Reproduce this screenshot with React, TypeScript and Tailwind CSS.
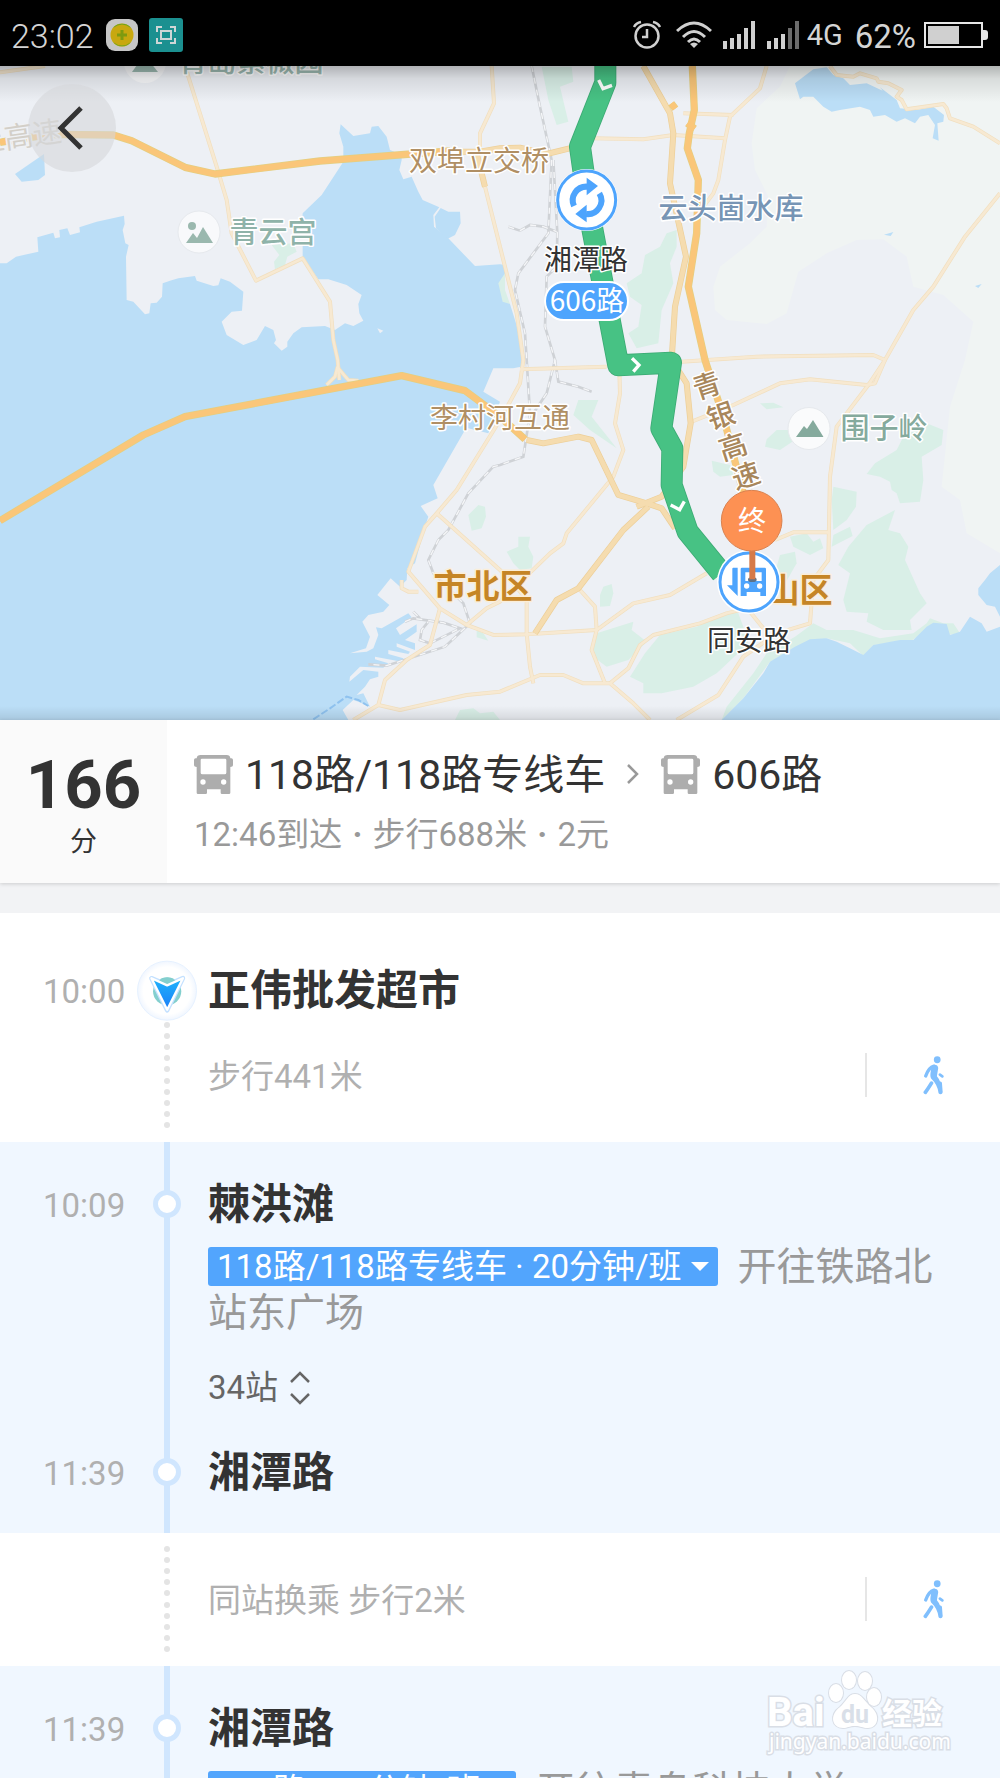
import React, { useState } from 'react';

const MAP_FONT = "font-['Noto_Sans_CJK_SC',sans-serif]";

const LAND_TINTS = [
    'M2370 198 L2340 260 2270 325 2255 430 2265 510 2305 590 2300 680 2250 730 2160 800 2140 860 2145 930 2180 960 2300 972 2360 940 2395 815 2480 760 2570 720 2650 718 2720 770 2740 860 2830 885 2920 965 2895 1080 2850 1220 2825 1460 2880 1500 2900 1600 3000 1660 3000 198 Z',
];

const PARKS = [
    'M1625 200 L1715 200 1720 245 1680 260 1705 365 1670 375 1645 300 Z',
    'M2030 690 L2000 700 1980 740 1935 765 1925 820 1880 850 1890 890 1925 915 1915 980 1885 1000 1910 1045 1975 1030 1985 930 2020 850 2010 790 2030 740 Z',
    'M815 735 L880 730 890 755 862 770 855 795 825 808 822 785 838 765 Z',
    'M1500 815 L1485 830 1500 880 1508 910 1530 912 1515 870 1515 820 Z',
    'M1735 1200 L1795 1200 1775 1250 1850 1345 1770 1290 1720 1245 Z',
    'M1435 1515 L1455 1520 1458 1550 1445 1585 1415 1592 1405 1545 Z',
    'M1430 1890 L1450 1900 1465 1922 1430 1912 Z',
    'M1380 2130 L1420 2125 1440 2140 1480 2135 1500 2160 1365 2160 Z',
    'M1555 1610 L1590 1610 1585 1640 1600 1670 1595 1705 1560 1710 1540 1690 1520 1655 1555 1640 Z',
    'M1810 1760 L1835 1752 1840 1780 1830 1818 1800 1820 1800 1785 Z',
    'M2280 1210 L2320 1208 2350 1222 2300 1228 Z',
    'M2330 1290 L2365 1290 2385 1320 2340 1350 2295 1340 2300 1318 Z',
    'M2135 1382 L2190 1395 2200 1425 2160 1430 2140 1415 Z',
    'M2780 1270 L2830 1290 2825 1335 2765 1370 2770 1440 2760 1505 2700 1510 2690 1480 2675 1470 2670 1445 2640 1430 2600 1422 2625 1390 2690 1350 2710 1310 Z',
    'M2500 1460 L2570 1475 2568 1520 2540 1560 2500 1590 2495 1500 Z',
    'M2685 1530 L2665 1590 2700 1600 2725 1640 2715 1680 2760 1780 2780 1810 2730 1860 2735 1890 2650 1890 2600 1865 2605 1840 2540 1835 2530 1800 2550 1720 2515 1695 2545 1640 2600 1575 Z',
    'M2370 1610 L2420 1600 2440 1625 2460 1615 2470 1645 2430 1665 2380 1640 Z',
    'M2500 1605 L2550 1580 2558 1608 2495 1640 Z',
    'M2340 1665 L2385 1655 2390 1690 2350 1760 2330 1700 Z',
    'M1790 1900 L1900 1865 1895 1890 1940 1925 1885 1980 1820 2000 1780 1970 1775 1935 Z',
    'M2215 1840 L2190 1835 2090 1880 1980 1905 1935 1960 1890 2030 1930 2050 1930 2080 1985 2080 2080 2060 2150 2020 2230 1945 2245 1925 2230 1880 Z',
    'M2165 2160 L2180 2120 2260 2020 2300 1960 2385 1910 2440 1870 2480 1890 2560 1890 2640 1915 2740 1900 2780 1870 2790 1855 2830 1870 2860 1870 2880 1900 2840 1905 2780 1890 2730 1925 2620 1935 2590 1968 2550 1930 2480 1915 2310 1985 2230 2095 Z',
];

const WATERS = [
    'M0 790 L20 790 48 770 115 755 112 712 160 698 165 715 180 712 178 690 202 685 210 705 240 697 238 682 290 665 372 647 374 672 368 690 376 730 386 735 378 770 380 900 400 905 435 943 448 940 452 910 470 908 486 890 488 850 510 842 535 835 585 828 590 842 640 858 655 856 662 835 690 845 730 875 726 932 695 935 665 965 680 1005 730 1035 770 1020 795 978 820 990 828 1020 822 1030 845 1052 862 1040 862 1025 880 1000 905 982 975 978 1005 990 1035 970 1060 978 1090 962 1078 940 1075 912 1085 885 1040 855 985 838 955 838 908 770 908 735 925 720 905 680 908 640 965 585 1030 485 1030 440 1018 400 1022 373 1060 408 1110 400 1115 380 1135 378 1160 410 1170 450 1205 465 1205 480 1198 510 1210 538 1235 530 1255 575 1268 600 1318 622 1300 645 1302 680 1345 715 1425 798 1500 793 1515 795 1515 820 1495 850 1508 905 1530 912 1545 960 1568 1040 1563 1100 1540 1105 1480 1105 1450 1175 1500 1205 1465 1300 1405 1285 1395 1290 1300 1455 1313 1495 1262 1518 1285 1550 1275 1580 1245 1690 1222 1705 1220 1740 1200 1760 1172 1735 1132 1785 1168 1815 1150 1835 1105 1845 1087 1865 1110 1910 1098 1945 1050 1960 1100 1955 1120 1945 1135 1905 1128 1882 1145 1885 1225 1840 1235 1852 1188 1885 1200 1905 1250 1873 1250 1895 1215 1920 1245 1930 1245 1950 1190 1930 1190 1940 1230 1955 1225 1962 1165 1950 1165 1962 1210 1975 1205 1985 1125 1970 1125 1978 1165 1990 1150 2003 1080 2000 1050 2030 1048 2045 1090 2010 1135 2015 1135 2030 1110 2038 1095 2060 1070 2085 1090 2080 1110 2120 1075 2105 1060 2100 1028 2130 1045 2160 0 2160 Z',
    'M1322 624 L1345 635 1380 635 1382 670 1365 705 1342 717 1308 685 1304 650 Z',
    'M45 522 L132 462 135 525 115 540 65 545 Z',
    'M2385 250 L2440 208 2480 202 2500 225 2530 235 2550 255 2600 250 2648 272 2640 262 2690 300 2700 325 2750 330 2800 320 2832 345 2830 365 2812 370 2816 422 2798 415 2805 375 2785 345 2760 350 2745 370 2715 355 2690 365 2655 345 2620 350 2610 330 2580 320 2520 330 2495 335 2470 320 2440 290 2410 290 2400 298 Z',
    'M2165 2160 L2230 2095 2290 2020 2310 1985 2385 1940 2430 1918 2480 1915 2510 1925 2550 1945 2590 1965 2620 1935 2700 1920 2740 1920 2780 1880 2800 1868 2840 1872 2850 1905 2880 1895 2910 1850 2945 1870 2960 1895 3000 1880 3000 2160 Z',
    'M3000 1695 L2970 1720 2955 1740 2935 1765 2935 1785 2960 1815 2985 1820 3000 1850 Z',
    'M2652 704 L2680 696 2672 708 Z',
    'M2925 858 L2945 852 2935 864 Z',
];

const MINOR_ROADS = [
    'M0 217 L135 198',
    'M555 198 L650 500 680 600 695 700 768 842 908 775 990 905 1000 1020 1013 1080 1018 1140',
    'M1013 1100 L1005 1130 980 1155 M1015 1105 L1045 1140 1075 1142',
    'M1475 198 L1482 310 1440 400 1440 440',
    'M1455 560 L1500 740 1550 940 1570 1080 1560 1150 1500 1260 1370 1470 1310 1540 1275 1580 1225 1715 1320 1825 1400 1875 1480 1905 1580 1903 1790 1890',
    'M1205 1740 L1205 1765 1225 1775 1255 1775',
    'M1310 1540 L1500 1710 1540 1750 1580 1800 1580 1900 1590 2000 1600 2050',
    'M1400 1875 L1460 1825 1500 1805 1650 1660 1690 1630 1700 1600 1840 1430 1870 1350 1845 1270 1860 1180 1858 1110',
    'M1320 1825 L1290 1935 1220 1980 1155 2040 1135 2115 1060 2160',
    'M1135 2115 L1200 2130 1400 2085 1500 2075 1620 2025 1690 2025 1750 2050 1830 2050 1900 2110 1950 2160',
    'M1740 1770 L1785 1820 1790 1890 1775 1950 1815 2050',
    'M1790 1890 L1900 1810 2010 1785 2120 1720',
    'M1830 2050 L1885 2005 1920 1935 1960 1905 2100 1870 2180 1840 2240 1825',
    'M2030 2160 L2155 2085 2230 1970 2330 1900 2430 1870 2440 1740 2485 1680 2490 1430 2510 1280 2540 1240 2605 1155 2655 1080 2740 930 2800 860 2895 710 3000 580',
    'M2250 1835 L2290 1885',
    'M1560 1108 L1820 1100',
    'M2045 1085 L2270 1070 2620 1065 2655 1080 2625 1150 2600 1155 2430 1138 2340 1150 2200 1215 2075 1265',
    'M1780 415 L1930 418 2020 405 2175 415',
    'M2050 340 L2200 345',
    'M2300 198 L2280 265 2190 350 2175 420 2155 540 2140 580 2095 640',
    'M2490 198 L2510 225 2560 230 2580 220 2630 235 2635 245 2665 250 2705 270 2690 290 2705 300 2720 328 2830 312 2840 325 2850 355 2920 380 3000 430',
    'M2325 1620 L2380 1597 2485 1597',
];

const RAILS = [
    'M1595 198 L1620 320 1655 480 1645 700 1555 820 1545 870 1575 1000 1590 1240 1570 1370 1500 1395 1480 1400 1405 1480 1345 1590 1315 1620 1285 1680 1300 1720 1390 1810 1410 1870 1335 1940 1160 1997 1105 1993',
    'M1660 480 L1672 700 1670 800 1640 830 1635 980 1665 1080 1640 1180 1600 1240',
    'M1525 680 L1560 692 1590 675 1630 680 1670 695',
    'M1665 1080 L1675 1145 1735 1160 1775 1175',
    'M1215 1865 L1240 1855 1330 1868 1380 1885 1290 1930 1260 1920 1265 1890 1285 1865 M1240 1835 L1260 1855',
];

const MID_ROADS = [
    'M1350 455 L1440 455 1500 445 1560 443 1640 462 1730 440',
    'M1430 460 L1455 560',
    'M1930 198 L2010 340 2020 400 2010 550 2058 770 2025 920 2015 1080 2060 1150 2072 1270 2050 1400 1985 1490 1910 1520',
    'M1580 1320 L1630 1330 1735 1310 1775 1320 1855 1485 1940 1510 1985 1525 2025 1585',
    'M1945 1520 L1870 1590 1735 1765 1670 1800 1605 1900',
];

const HIGHWAYS = [
    'M0 427 L150 403 340 405 395 422 555 502 645 522 960 483 1350 453',
    'M0 1562 L430 1305 555 1250 1205 1127 1395 1172 1500 1250 1575 1318',
    'M2077 198 L2083 330 2068 400 2062 445 2095 540 2090 700 2065 860 2115 1080 2170 1250 2230 1480',
    'M2014 310 L2026 326 M2062 370 L2084 386',
];

const ROUTE_PATH = 'M1816 150 L1816 248 1740 440 1768 640 1855 1096 2013 1088 1984 1285 2017 1345 2015 1455 2063 1595 2165 1720';

const Roads: React.FC<{ paths: string[]; edge: string; fill: string; width: number }> = ({ paths, edge, fill, width }) => (
    <g fill="none" strokeLinejoin="round">
        {paths.map((d) => <path key={d} d={d} stroke={edge} strokeWidth={width + 4} />)}
        {paths.map((d) => <path key={d + 'f'} d={d} stroke={fill} strokeWidth={width} />)}
    </g>
);

interface LabelProps {
    x: number;
    y: number;
    size: number;
    color: string;
    weight?: number;
    halo?: string;
    transform?: string;
    children: string;
}

const Label: React.FC<LabelProps> = ({ x, y, size, color, weight = 400, halo = '#ffffff', transform, children }) => (
    <text
        x={x}
        y={y}
        fontSize={size}
        fontWeight={weight}
        fill={color}
        stroke={halo}
        strokeWidth="3"
        strokeLinejoin="round"
        paintOrder="stroke"
        textAnchor="middle"
        transform={transform}
    >
        {children}
    </text>
);

const RouteMap: React.FC = () => (
    <svg viewBox="0 66 1000 654" preserveAspectRatio="xMidYMid slice" className={`block w-full h-full ${MAP_FONT}`}>
        <defs>
            <linearGradient id="topShade" x1="0" y1="0" x2="0" y2="1">
                <stop offset="0" stopColor="#000" stopOpacity=".26" />
                <stop offset=".35" stopColor="#000" stopOpacity=".1" />
                <stop offset="1" stopColor="#000" stopOpacity="0" />
            </linearGradient>
            <linearGradient id="bottomShade" x1="0" y1="0" x2="0" y2="1">
                <stop offset="0" stopColor="#000" stopOpacity="0" />
                <stop offset="1" stopColor="#000" stopOpacity=".1" />
            </linearGradient>
        </defs>
        <rect y="66" width="1000" height="654" fill="#edf0f5" />
        {/* geometry is kept at three units per pixel */}
        <g transform="scale(0.33333)">
            {LAND_TINTS.map((d) => <path key={d} d={d} fill="#f0f4f3" />)}
            {PARKS.map((d) => <path key={d} d={d} fill="#d9efe7" />)}
            {WATERS.map((d) => <path key={d} d={d} fill="#bbdef7" />)}
            <path d="M1132 985 L1150 992 1140 1000 Z" fill="#edf0f5" />
            <path d="M940 2158 L990 2125 1040 2090 1075 2100 1105 2118" fill="none" stroke="#8fc2ef" strokeWidth="6" strokeDasharray="22 7" />
            <g fill="none">
                {RAILS.map((d) => <path key={d} d={d} stroke="#cfd2d6" strokeWidth="8" />)}
                {RAILS.map((d) => <path key={d + 'w'} d={d} stroke="#f5f6f8" strokeWidth="4" strokeDasharray="18 18" />)}
            </g>
            <Roads paths={MINOR_ROADS} edge="#f1dfbf" fill="#f7e9d2" width={8} />
            <Roads paths={MID_ROADS} edge="#edcf98" fill="#f5dcaf" width={14} />
            <Roads paths={HIGHWAYS} edge="#e3cf82" fill="#fac679" width={18} />
            <path d={ROUTE_PATH} fill="none" stroke="#3cab74" strokeWidth="66" strokeLinejoin="round" />
            <path d={ROUTE_PATH} fill="none" stroke="#47c284" strokeWidth="61" strokeLinejoin="round" />
            <g fill="none" stroke="#fff" strokeWidth="10">
                <path d="M1796 240 L1809 266 1836 256" />
                <path d="M1896 1075 L1917 1095 1900 1115" />
                <path d="M2012 1515 L2039 1529 2053 1504" />
            </g>
        </g>

        <circle cx="145" cy="62" r="21" fill="#f8f9fb" />
        <path d="M132 72 L142 58 150 62 158 72 Z" fill="#9dbab2" />
        <Label x={251} y={72} size={29} color="#9dbab2" weight={500}>青岛紫薇园</Label>
        <Label x={20} y={147} size={29} color="#d3cfc8" halo="#eff1f4" transform="rotate(-8 20 147)">上高速</Label>
        <Label x={479} y={171} size={28} color="#b08f64">双埠立交桥</Label>
        <Label x={500} y={428} size={28} color="#b08f64">李村河互通</Label>
        <Label x={731} y={219} size={29} color="#7795b5" weight={500}>云头崮水库</Label>

        <circle cx="199" cy="232" r="21" fill="#f8f9fb" stroke="#e6e9ed" />
        <circle cx="192" cy="226" r="4" fill="#9ab8ae" />
        <path d="M186 243 L193 233 197 238 203 227 213 243 Z" fill="#9ab8ae" />
        <Label x={273} y={243} size={29} color="#8fb3a9" weight={500}>青云宫</Label>
        <circle cx="809" cy="428.500" r="21" fill="#fafbfc" stroke="#e6e9ed" />
        <path d="M796 437 L804 426 807 429 813 420 823.500 437 Z" fill="#85aa9d" />
        <Label x={884} y={439} size={29} color="#85aa9d" weight={500}>围子岭</Label>

        <Label x={707} y={396} size={28} color="#a8875c" weight={500} transform="rotate(-18 707 386)">青</Label>
        <Label x={721} y={426} size={28} color="#a8875c" weight={500} transform="rotate(-18 721 416)">银</Label>
        <Label x={733} y={457} size={28} color="#a8875c" weight={500} transform="rotate(-18 733 447)">高</Label>
        <Label x={746} y={486} size={28} color="#a8875c" weight={500} transform="rotate(-18 746 476)">速</Label>
        <Label x={483} y={598} size={33} color="#c58526" weight={700} halo="#fbeed8">市北区</Label>
        <Label x={783} y={602} size={33} color="#c58526" weight={700} halo="#fbeed8">崂山区</Label>

        {/* transfer stop */}
        <circle cx="586.667" cy="200" r="31" fill="#fff" />
        <circle cx="586.667" cy="200" r="29" fill="none" stroke="#4da4fd" strokeWidth="3" />
        <g transform="translate(500 0) scale(0.33333)">
            <path d="M222 618 A41 41 0 0 1 262 560" fill="none" stroke="#4da4fd" strokeWidth="18" />
            <path d="M298 580 A41 41 0 0 1 258 642" fill="none" stroke="#4da4fd" strokeWidth="18" />
            <path d="M260 533 L294 558 260 586 Z M260 614 V667 L226 642 Z" fill="#4da4fd" />
        </g>
        <Label x={586} y={270} size={28} color="#333333">湘潭路</Label>
        <rect x="545" y="282" width="83" height="38" rx="19" fill="#4da4fd" stroke="#fff" strokeWidth="2" />
        <text x="587" y="311" fontSize="28" fill="#fff" textAnchor="middle">606路</text>

        {/* final stop with the destination pin standing on it */}
        <circle cx="749" cy="582" r="32" fill="#fff" />
        <circle cx="749" cy="582" r="29" fill="none" stroke="#4da4fd" strokeWidth="3" />
        <g transform="translate(500 360) scale(0.33333)">
            <path d="M697 626 Q697 623 700 623 H713 V708 L681 676 H697 Z" fill="#4da4fd" />
            <path fillRule="evenodd" d="M726 623 H794 Q798 623 798 627 V708 H781 V696 H740 V708 H722 V627 Q722 623 726 623 Z M736 637 V663 H785 V637 Z M732 678 a8 8 0 1 0 16 0 a8 8 0 1 0 -16 0 M771 678 a8 8 0 1 0 16 0 a8 8 0 1 0 -16 0" fill="#4da4fd" />
            <ellipse cx="757" cy="659" rx="13" ry="7" fill="#5d7288" />
            <path d="M748 560 H766 V658 H748 Z" fill="#d67a48" />
            <circle cx="755" cy="482" r="91" fill="#fd9153" stroke="#d9824f" strokeWidth="3" />
        </g>
        <text x="752" y="531" fontSize="28" fill="#fff" textAnchor="middle">终</text>
        <Label x={749} y={651} size={28} color="#333333">同安路</Label>

        <rect y="66" width="1000" height="36" fill="url(#topShade)" />
        <rect y="706" width="1000" height="14" fill="url(#bottomShade)" />
    </svg>
);

const SignalIcon: React.FC<{ dim?: boolean }> = ({ dim }) => (
    <svg width="32" height="28" viewBox="0 0 32 28" fill="#d0d0d0">
        <rect x="0" y="20" width="4" height="8" />
        <rect x="7" y="17" width="4" height="11" />
        <rect x="14" y="13" width="4" height="15" />
        <rect x="21" y="7" width="4" height="21" fill={dim ? '#6b6b6b' : '#d0d0d0'} />
        <rect x="28" y="0" width="4" height="28" fill={dim ? '#6b6b6b' : '#d0d0d0'} />
    </svg>
);

const StatusBar: React.FC = () => (
    <header className="flex h-[66px] shrink-0 items-center bg-black pt-1 pl-[11px] pr-3 text-[33px] leading-none text-[#d4d4d4]">
        <span className="pt-[2px] text-[34px] font-light">23:02</span>
        <svg className="ml-[11px]" width="34" height="34" viewBox="0 0 34 34">
            <rect x="1" y="1" width="32" height="32" rx="9" fill="#c6c6c6" />
            <circle cx="17" cy="17" r="11.500" fill="#c8a80f" />
            <path d="M8 10 A11.500 11.500 0 0 1 26 10 Q17 3 8 10 Z M8 24 A11.500 11.500 0 0 0 26 24 Q17 31 8 24 Z" fill="#6aa51e" />
            <path d="M17 12 V22 M12 17 H22" stroke="#7f9a10" strokeWidth="3" />
        </svg>
        <svg className="ml-[10px]" width="34" height="34" viewBox="0 0 34 34">
            <rect width="34" height="34" rx="3" fill="#1b9090" />
            <path d="M8 14 V9 H13 M21 9 H26 V14 M26 20 V25 H21 M13 25 H8 V20" fill="none" stroke="#cfd6d6" strokeWidth="2" />
            <rect x="12" y="13" width="10" height="8" fill="none" stroke="#cfd6d6" strokeWidth="2" />
        </svg>
        <div className="ml-auto flex items-center">
            <svg width="30" height="30" viewBox="0 0 30 30" fill="none" stroke="#d0d0d0" strokeWidth="2.500">
                <circle cx="15" cy="16" r="11.500" />
                <path d="M15 9 V17 H10 M2 7 Q4 3 9 2 M28 7 Q26 3 21 2" />
            </svg>
            <svg className="ml-[14px]" width="36" height="28" viewBox="0 0 36 28" fill="none" stroke="#d0d0d0" strokeWidth="3">
                <path d="M1 10 Q18 -6 35 10 M7 16 Q18 5 29 16 M12 21 Q18 15 24 21" />
                <path d="M14 23 Q18 20 22 23 L18 27 Z" fill="#d0d0d0" stroke="none" />
            </svg>
            <span className="ml-[11px] flex gap-3">
                <SignalIcon />
                <SignalIcon dim />
            </span>
            <span className="ml-2 text-[29px]">4G</span>
            <span className="ml-3 pt-[2px]">62%</span>
            <svg className="ml-2" width="64" height="26" viewBox="0 0 64 26">
                <rect x="1" y="1" width="57" height="24" fill="none" stroke="#e6e6e6" strokeWidth="2" />
                <rect x="4" y="4" width="31" height="18" fill="#d0d0d0" />
                <path d="M59 8 H61 Q64 8 64 11 V15 Q64 18 61 18 H59 Z" fill="#e6e6e6" />
            </svg>
        </div>
    </header>
);

const BusIcon: React.FC = () => (
    <svg className="shrink-0" width="39" height="39" viewBox="0 0 117 117" fill="#adadad">
        <path fillRule="evenodd" d="M20 0 H98 Q108 0 109 10 H112 Q117 10 117 15 V31 Q117 36 109 36 V113 Q109 117 105 117 H84 Q80 117 80 113 V103 H39 V113 Q39 117 35 117 H12 Q8 117 8 113 V36 Q0 36 0 31 V15 Q0 10 5 10 H8 Q9 0 20 0 Z M20 15 Q20 11 24 11 H93 Q97 11 97 15 V53 Q97 58 92 58 H25 Q20 58 20 53 Z M19 81 a8 8 0 1 0 16 0 a8 8 0 1 0 -16 0 M81 81 a8 8 0 1 0 16 0 a8 8 0 1 0 -16 0" />
    </svg>
);

const WalkIcon: React.FC = () => (
    <svg width="21" height="39" viewBox="0 0 62 115" fill="none" stroke="#80bffd" strokeLinecap="round" strokeLinejoin="round">
        <circle cx="42" cy="11" r="10" fill="#80bffd" stroke="none" />
        <path d="M33 26 Q43 25 45 35 L41 60 Q55 75 57 110 Q52 116 46 110 Q44 85 24 66 Q20 60 23 45 L24 38 L22 38 Z" fill="#80bffd" stroke="none" />
        <path d="M32 30 Q17 34 8 59" strokeWidth="10" />
        <path d="M50 55 L57 60" strokeWidth="8" />
        <path d="M25 80 Q16 95 7 107" strokeWidth="11" />
        <path d="M51 80 Q52 92 53 106" strokeWidth="10" />
    </svg>
);

const StartMarker: React.FC = () => (
    <svg width="61" height="61" viewBox="0 0 183 183">
        <defs>
            <linearGradient id="arrowFill" x1="0" y1="0" x2="0" y2="1">
                <stop offset="0" stopColor="#1fb4fb" />
                <stop offset="1" stopColor="#1b7df8" />
            </linearGradient>
            <radialGradient id="markerFill">
                <stop offset=".8" stopColor="#ffffff" />
                <stop offset="1" stopColor="#f0f6ff" />
            </radialGradient>
        </defs>
        <circle cx="91.500" cy="92" r="90" fill="url(#markerFill)" stroke="#e6f1ff" strokeWidth="3" />
        <circle cx="92" cy="94" r="43" fill="#83cfce" />
        <path d="M44 54 L92 74 140 54 92 152 Z" fill="url(#arrowFill)" stroke="#c4e1ff" strokeWidth="14" strokeLinejoin="round" />
        <path d="M66 62 Q92 42 118 62 L92 74 Z" fill="#83cfce" />
        <path d="M44 54 L92 76 140 54 92 150 Z" fill="url(#arrowFill)" stroke="#fff" strokeWidth="7" strokeLinejoin="round" />
    </svg>
);

const Dots: React.FC = () => (
    <div className="flex h-[106px] flex-col items-center justify-between">
        {Array.from({ length: 10 }, (_, i) => (
            <span key={i} className="size-[6px] rounded-full bg-[#e4e4e4]" />
        ))}
    </div>
);

const ROW = 'relative grid grid-cols-[137px_60px_1fr] items-center';

const StationRow: React.FC<{ time: string; name: string; start?: boolean }> = ({ time, name, start }) => (
    <div className={`${ROW} h-[60px]`}>
        <time className="pt-[3px] pl-[43px] text-[33px] text-[#b0b0b0]">{time}</time>
        <span className="flex justify-center">
            {start ? <StartMarker /> : <span className="size-7 rounded-full border-[5px] border-[#d0e6fe] bg-white" />}
        </span>
        <h2 className="pt-[2px] pl-[11px] text-[42px] leading-[60px] font-bold text-[#333333]">{name}</h2>
    </div>
);

const WalkRow: React.FC<{ text: string }> = ({ text }) => (
    <div className={`${ROW} h-[112px]`}>
        <span />
        <Dots />
        <div className="flex items-center justify-between pl-[11px]">
            <p className="pt-[3px] text-[33px] text-[#b0b0b0]">{text}</p>
            <button type="button" aria-label="步行导航" className="flex h-11 w-[135px] items-center justify-center border-l-2 border-[#e6e6e6]">
                <WalkIcon />
            </button>
        </div>
    </div>
);

interface RideProps {
    from: [string, string];
    to?: [string, string];
    line: string;
    direction: string;
    stops: number;
}

const Ride: React.FC<RideProps> = ({ from, to, line, direction, stops }) => {
    const [open, setOpen] = useState(false);

    return (
        <section className="relative bg-[#f0f7ff] pt-[31px] pb-8">
            <span className="absolute inset-y-0 left-[164px] w-[6px] bg-[#d0e6fe]" />
            <StationRow time={from[0]} name={from[1]} />
            <div className="mt-[11px] pl-52 pr-12">
                <p className="text-[39px] leading-[46px] text-[#999999]">
                    <button type="button" className="mt-[3px] mr-5 inline-flex h-[39px] items-center rounded-[3px] bg-[#52a5fd] px-[9px] align-top text-[33px] leading-none whitespace-nowrap text-white">
                        {line}
                        <svg className="ml-[9px]" width="18" height="9" viewBox="0 0 18 9" fill="#fff">
                            <path d="M0 0 H18 L9 9 Z" />
                        </svg>
                    </button>
                    {direction}
                </p>
                <button type="button" aria-expanded={open} onClick={() => setOpen(!open)} className="mt-[30px] flex h-11 items-center gap-3 text-[33px] text-[#666666]">
                    {stops}站
                    <svg width="20" height="34" viewBox="0 0 20 34" fill="none" stroke="#666666" strokeWidth="2.500">
                        <path d="M1 11 L10 2 L19 11 M1 23 L10 32 L19 23" />
                    </svg>
                </button>
            </div>
            {to && (
                <div className="mt-[31px]">
                    <StationRow time={to[0]} name={to[1]} />
                </div>
            )}
        </section>
    );
};

const Separator: React.FC = () => <span className="mx-[2px] font-bold">·</span>;

const Summary: React.FC = () => (
    <section className="relative flex h-[163px] shrink-0 bg-white shadow-[0_1px_4px_rgba(0,0,0,0.16)]">
        <div className="flex w-[167px] flex-col items-center bg-[#fafafa] pt-[31px] text-[#333333]">
            <strong className="text-[67px] leading-[68px] font-bold">166</strong>
            <span className="text-[27px] leading-[46px]">分</span>
        </div>
        <div className="flex flex-col pt-[26px] pl-[27px]">
            <h1 className="flex h-14 items-center text-[41px] leading-none text-[#333333]">
                <BusIcon />
                <span className="ml-3 pt-[2px]">118路/118路专线车</span>
                <svg className="mx-[22px]" width="12" height="20" viewBox="0 0 12 20" fill="none" stroke="#999999" strokeWidth="2.500">
                    <path d="M1 1 L10 10 L1 19" />
                </svg>
                <BusIcon />
                <span className="ml-3 pt-[2px]">606路</span>
            </h1>
            <p className="mt-[9px] text-[33px] leading-[48px] text-[#999999]">12:46到达 <Separator /> 步行688米 <Separator /> 2元</p>
        </div>
    </section>
);

const Watermark: React.FC = () => (
    <svg className="absolute right-[48px] bottom-[16px]" width="188" height="94" viewBox="0 0 188 94">
        <g fill="#fff" stroke="#d9dee6" strokeWidth="2" paintOrder="stroke">
            <ellipse cx="72" cy="25" rx="7" ry="9" />
            <ellipse cx="85" cy="12" rx="7" ry="9" />
            <ellipse cx="101" cy="13" rx="7" ry="9" />
            <ellipse cx="110" cy="29" rx="7" ry="9" />
            <path d="M91 26 C98 26 101 34 107 39 C117 47 114 60 104 60 C98 60 97 58 91 58 C85 58 84 60 79 60 C68 60 65 47 76 39 C82 34 84 26 91 26 Z" />
            <text x="3" y="58" fontSize="40" fontWeight="700" strokeWidth="3" className="font-['Roboto',sans-serif]">Bai</text>
            <text x="118" y="56" fontSize="30" fontWeight="700" strokeWidth="3" className={MAP_FONT}>经验</text>
            <text x="5" y="81" fontSize="21" strokeWidth="3" className="font-['Noto_Sans',sans-serif]">jingyan.baidu.com</text>
        </g>
        <text x="91" y="55" fontSize="25" fontWeight="700" textAnchor="middle" fill="#d9dfe8" className="font-['Roboto',sans-serif]">du</text>
    </svg>
);

const App: React.FC = () => (
    <main className="relative flex h-screen flex-col overflow-hidden bg-[#f2f3f5] font-['Roboto','Noto_Sans_CJK_SC',sans-serif]" lang="zh-CN">
        <StatusBar />
        <div className="relative h-[654px] shrink-0">
            <RouteMap />
            <button type="button" aria-label="返回" className="absolute top-[18px] left-7 flex size-[88px] items-center justify-center rounded-full bg-[#d5d7da]/60">
                <svg className="mr-1" width="26" height="44" viewBox="0 0 26 44" fill="none" stroke="#333333" strokeWidth="5">
                    <path d="M24 2 L4 22 L24 42" />
                </svg>
            </button>
        </div>
        <Summary />
        <div className="mt-[30px] min-h-0 flex-1 overflow-hidden">
            <section className="bg-white pt-[46px] pb-[11px]">
                <StationRow time="10:00" name="正伟批发超市" start />
                <WalkRow text="步行441米" />
            </section>
            <Ride from={['10:09', '棘洪滩']} to={['11:39', '湘潭路']} line="118路/118路专线车 · 20分钟/班" direction="开往铁路北站东广场" stops={34} />
            <section className="bg-white pt-[10px] pb-[11px]">
                <WalkRow text="同站换乘 步行2米" />
            </section>
            <Ride from={['11:39', '湘潭路']} line="606路 · 20分钟/班" direction="开往青岛科技大学" stops={29} />
        </div>
        <Watermark />
    </main>
);

export default App;
